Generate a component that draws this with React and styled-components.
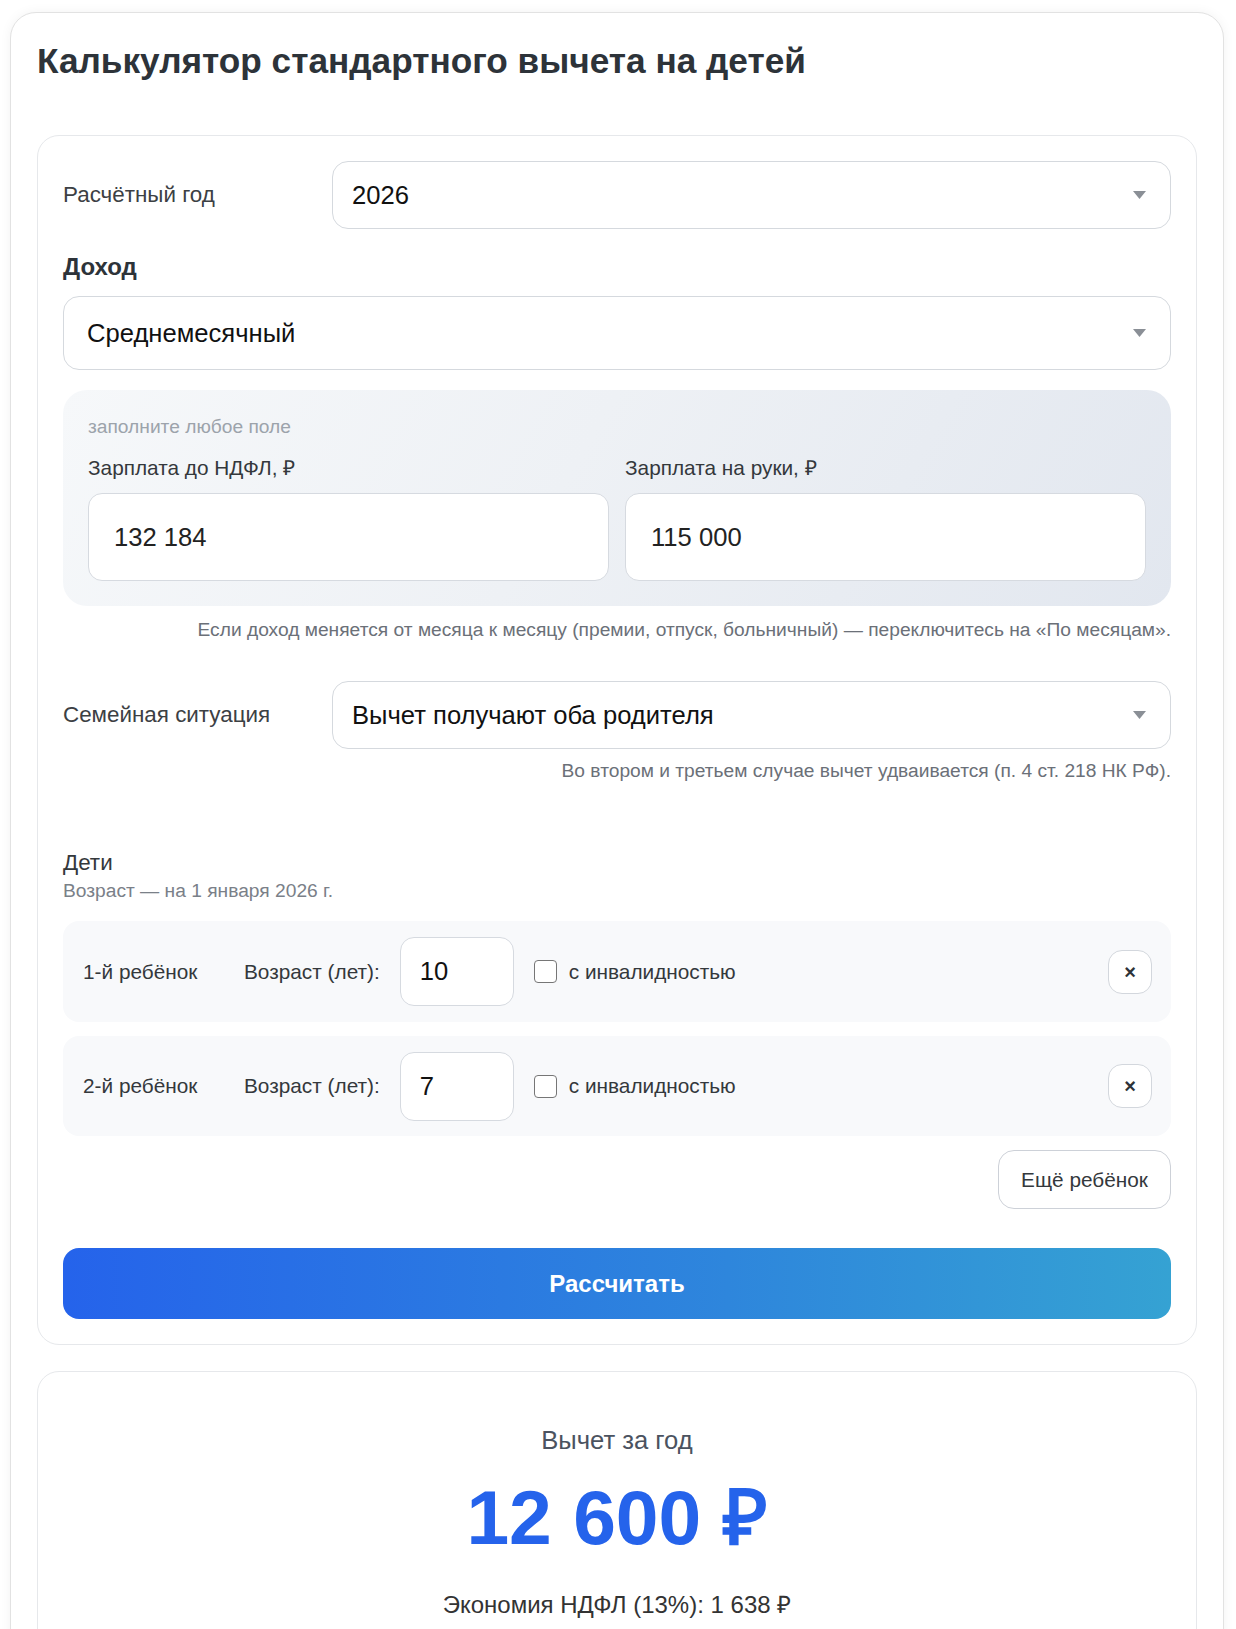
import React from 'react';
import styled, { createGlobalStyle } from 'styled-components';

const Global = createGlobalStyle`
  html, body { margin: 0; padding: 0; background: #fff; }
  body { font-family: "Liberation Sans", Arial, sans-serif; color: #333; }
  * { box-sizing: border-box; }
`;

const Page = styled.div`
  padding: 12px 12px 0 10px;
`;

const Shell = styled.div`
  background: #fff;
  border: 1px solid #e2e2e2;
  border-radius: 26px;
  padding: 26px 26px 0;
  box-shadow: 0 0 12px rgba(0, 0, 0, 0.05);
`;

const Title = styled.h1`
  margin: 0 0 52px;
  font-size: 35.2px;
  line-height: 44px;
  font-weight: 700;
  color: #2d3339;
`;

const Card = styled.section`
  background: #fff;
  border: 1px solid #e6e8eb;
  border-radius: 22px;
  padding: 25px;
`;

const InlineRow = styled.div`
  display: flex;
  align-items: center;
  margin-top: ${(p) => p.$mt || 0}px;
`;

const RowLabel = styled.label`
  flex: 0 0 269px;
  font-size: 22.4px;
  line-height: 26px;
  color: #3c4044;
`;

const SelectWrap = styled.div`
  position: relative;
  flex: 1;
`;

const Select = styled.select`
  appearance: none;
  -webkit-appearance: none;
  width: 100%;
  height: ${(p) => p.$h}px;
  padding: 0 60px 0 ${(p) => p.$pl}px;
  border: 1px solid #d5d9de;
  border-radius: 16px;
  background: #fff;
  font-family: inherit;
  font-size: 25.6px;
  color: #111;
  outline: none;
`;

const Arrow = styled.svg`
  position: absolute;
  right: 25px;
  top: 50%;
  margin-top: -4px;
  pointer-events: none;
`;

const SectionTitle = styled.div`
  margin: 23px 0 15px;
  font-size: 24px;
  line-height: 29px;
  font-weight: 700;
  color: #2d3339;
`;

const IncomeBox = styled.div`
  margin-top: 20px;
  padding: 25px;
  border-radius: 24px;
  background: linear-gradient(120deg, #f6f8fa 0%, #eef1f5 45%, #e2e7ef 100%);
`;

const FillHint = styled.div`
  font-size: 19.2px;
  line-height: 23px;
  color: #9ca3ab;
  margin-bottom: 18px;
`;

const TwoCols = styled.div`
  display: grid;
  grid-template-columns: 1fr 1fr;
  gap: 16px;
`;

const Field = styled.div`
  display: flex;
  flex-direction: column;
`;

const FieldLabel = styled.label`
  font-size: 20.8px;
  line-height: 24px;
  color: #34383c;
  margin-bottom: 13px;
`;

const TextInput = styled.input`
  height: 88px;
  width: 100%;
  padding: 0 25px;
  border: 1px solid #d6dae0;
  border-radius: 14px;
  background: #fff;
  font-family: inherit;
  font-size: 25.6px;
  color: #222;
  outline: none;
`;

const Hint = styled.p`
  margin: ${(p) => p.$mt}px 0 0;
  text-align: right;
  font-size: 19.2px;
  line-height: 24px;
  color: #6b7078;
`;

const ChildrenHead = styled.div`
  margin-top: 67px;
`;

const ChildrenTitle = styled.div`
  font-size: 22.4px;
  line-height: 26px;
  color: #34383c;
`;

const ChildrenSub = styled.div`
  margin-top: 4px;
  font-size: 19.2px;
  line-height: 22px;
  color: #7a8088;
`;

const ChildList = styled.div`
  margin-top: 19px;
  display: flex;
  flex-direction: column;
  gap: 14px;
`;

const ChildRow = styled.div`
  display: flex;
  align-items: center;
  gap: 20px;
  height: ${(p) => p.$h}px;
  padding: 0 19px 0 20px;
  border-radius: 16px;
  background: #f8f9fb;
`;

const ChildName = styled.span`
  flex: 0 0 141px;
  font-size: 20.8px;
  color: #34383c;
`;

const AgeLabel = styled.span`
  font-size: 20.8px;
  color: #34383c;
`;

const AgeInput = styled.input`
  width: 114px;
  height: 69px;
  padding: 0 19px;
  border: 1px solid #d6dae0;
  border-radius: 14px;
  background: #fff;
  font-family: inherit;
  font-size: 25.6px;
  color: #111;
  outline: none;
`;

const CheckLabel = styled.label`
  display: flex;
  align-items: center;
  gap: 12px;
  font-size: 20.8px;
  color: #34383c;
`;

const CheckBox = styled.span`
  width: 23px;
  height: 23px;
  border: 1.5px solid #767676;
  border-radius: 4px;
  background: #fff;
`;

const RemoveBtn = styled.button`
  margin-left: auto;
  width: 44px;
  height: 44px;
  border: 1px solid #d3d7dd;
  border-radius: 14px;
  background: #fff;
  font-family: inherit;
  font-size: 20px;
  font-weight: 700;
  line-height: 1;
  color: #2d3339;
  padding: 0;
  display: flex;
  align-items: center;
  justify-content: center;
`;

const AddRow = styled.div`
  display: flex;
  justify-content: flex-end;
  margin-top: 14px;
`;

const AddBtn = styled.button`
  width: 173px;
  height: 59px;
  border: 1px solid #cdd1d8;
  border-radius: 16px;
  background: #fff;
  font-family: inherit;
  font-size: 20.8px;
  color: #34383c;
`;

const CalcBtn = styled.button`
  display: block;
  width: 100%;
  margin-top: 39px;
  height: 71px;
  border: 0;
  border-radius: 16px;
  background: linear-gradient(90deg, #2563eb 0%, #2e86dc 60%, #35a2d3 100%);
  font-family: inherit;
  font-size: 24px;
  font-weight: 700;
  color: #fff;
`;

const ResultCard = styled.section`
  margin-top: 26px;
  padding: 52px 25px 40px;
  border: 1px solid #e6e8eb;
  border-radius: 22px;
  background: #fff;
  text-align: center;
`;

const ResultLabel = styled.div`
  font-size: 25.6px;
  line-height: 32px;
  color: #4b5360;
`;

const ResultValue = styled.div`
  margin-top: 15px;
  font-size: 76.8px;
  line-height: 92px;
  font-weight: 700;
  color: #2563eb;
`;

const ResultNote = styled.div`
  margin-top: 27px;
  font-size: 24px;
  line-height: 29px;
  color: #333;
`;

const DropArrow = () => (
  <Arrow width="13" height="8" viewBox="0 0 13 8">
    <path d="M0 0 H13 L6.5 8 Z" fill="#8a8f96" />
  </Arrow>
);

const Dropdown = ({ value, h, pl }) => (
  <SelectWrap>
    <Select $h={h} $pl={pl} defaultValue={value}>
      <option>{value}</option>
    </Select>
    <DropArrow />
  </SelectWrap>
);

const children = [
  { name: '1-й ребёнок', age: '10', h: 101 },
  { name: '2-й ребёнок', age: '7', h: 100 },
];

export default function App() {
  return (
    <>
      <Global />
      <Page>
        <Shell>
          <Title>Калькулятор стандартного вычета на детей</Title>
          <Card>
            <InlineRow>
              <RowLabel>Расчётный год</RowLabel>
              <Dropdown value="2026" h={68} pl={19} />
            </InlineRow>

            <SectionTitle>Доход</SectionTitle>
            <SelectWrap>
              <Select $h={74} $pl={23} defaultValue="Среднемесячный">
                <option>Среднемесячный</option>
              </Select>
              <DropArrow />
            </SelectWrap>

            <IncomeBox>
              <FillHint>заполните любое поле</FillHint>
              <TwoCols>
                <Field>
                  <FieldLabel>Зарплата до НДФЛ, ₽</FieldLabel>
                  <TextInput defaultValue="132 184" />
                </Field>
                <Field>
                  <FieldLabel>Зарплата на руки, ₽</FieldLabel>
                  <TextInput defaultValue="115 000" />
                </Field>
              </TwoCols>
            </IncomeBox>
            <Hint $mt={12}>
              Если доход меняется от месяца к месяцу (премии, отпуск, больничный) — переключитесь на «По месяцам».
            </Hint>

            <InlineRow $mt={39}>
              <RowLabel>Семейная ситуация</RowLabel>
              <Dropdown value="Вычет получают оба родителя" h={68} pl={19} />
            </InlineRow>
            <Hint $mt={10}>Во втором и третьем случае вычет удваивается (п. 4 ст. 218 НК РФ).</Hint>

            <ChildrenHead>
              <ChildrenTitle>Дети</ChildrenTitle>
              <ChildrenSub>Возраст — на 1 января 2026 г.</ChildrenSub>
            </ChildrenHead>

            <ChildList>
              {children.map((c) => (
                <ChildRow key={c.name} $h={c.h}>
                  <ChildName>{c.name}</ChildName>
                  <AgeLabel>Возраст (лет):</AgeLabel>
                  <AgeInput defaultValue={c.age} />
                  <CheckLabel>
                    <CheckBox />
                    с инвалидностью
                  </CheckLabel>
                  <RemoveBtn aria-label="Удалить">×</RemoveBtn>
                </ChildRow>
              ))}
            </ChildList>

            <AddRow>
              <AddBtn>Ещё ребёнок</AddBtn>
            </AddRow>

            <CalcBtn>Рассчитать</CalcBtn>
          </Card>

          <ResultCard>
            <ResultLabel>Вычет за год</ResultLabel>
            <ResultValue>12 600 ₽</ResultValue>
            <ResultNote>Экономия НДФЛ (13%): 1 638 ₽</ResultNote>
          </ResultCard>
        </Shell>
      </Page>
    </>
  );
}
